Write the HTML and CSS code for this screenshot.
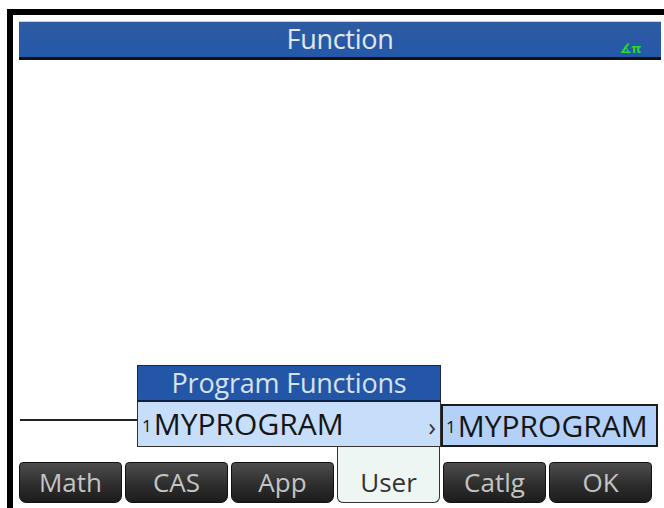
FILE: index.html
```html
<!DOCTYPE html>
<html lang="en">
<head>
  <meta charset="UTF-8">
  <title>Function</title>
  <link rel="stylesheet" href="styles.css">
</head>
<body>
  <div class="screen">
    <div class="title-bar">
      <span class="title">Function</span>
      <span class="mode">&#8737;&#960;</span>
    </div>
    <div class="canvas"></div>
    <div class="menu-area">
      <div class="menu-head">Program Functions</div>
      <div class="menu-line">
        <div class="entry-line"></div>
        <div class="menu-row">
          <span class="idx">1</span><span class="name">MYPROGRAM</span>
          <span class="chev">&#8250;</span>
        </div>
        <div class="sub-row">
          <span class="idx">1</span><span class="name">MYPROGRAM</span>
        </div>
      </div>
    </div>
    <div class="softkeys">
      <div class="key">Math</div>
      <div class="key">CAS</div>
      <div class="key">App</div>
      <div class="key active">User</div>
      <div class="key">Catlg</div>
      <div class="key">OK</div>
    </div>
  </div>
</body>
</html>
```

FILE: styles.css
```css
body { margin: 0; background: #fff; font-family: "Open Sans", "DejaVu Sans", sans-serif; }
.screen { margin: 9px 0 0 7px; height: 499px; box-sizing: border-box; border-top: 6px solid #000; border-left: 6px solid #000; display: flex; flex-direction: column; }

.title-bar { position: relative; margin: 7px 3px 0 6px; height: 35px; background: linear-gradient(#2f5aa2, #2459aa); border-bottom: 3px solid #111; box-shadow: 0 -1px 0 #c8d0dc; display: flex; align-items: center; justify-content: center; }
.title { color: #e0e8f0; font-size: 27px; line-height: 1; letter-spacing: -0.3px; margin-top: -2px; }
.mode { position: absolute; right: 20px; bottom: 2px; color: #22e022; font-size: 13px; font-weight: bold; line-height: 1; }

.canvas { flex: 1; }

.menu-area { display: flex; flex-direction: column; }
.menu-head { margin-left: 124px; width: 304px; height: 37px; box-sizing: border-box; background: #2356a6; border: 1px solid #1a2a44; border-bottom: 2px solid #102040; color: #d6e2f2; font-size: 27px; line-height: 33px; text-align: center; letter-spacing: -0.2px; }
.menu-line { display: flex; align-items: flex-end; height: 45px; }
.entry-line { width: 117px; height: 2px; background: #222; margin: 0 0 26px 7px; }
.menu-row { width: 304px; height: 45px; box-sizing: border-box; background: #c6defa; border: 1px solid #333; border-top: 0; display: flex; align-items: center; padding-left: 4px; }
.sub-row { width: 217px; height: 43px; box-sizing: border-box; background: #b2d0f8; border: 2px solid #1c1c1c; display: flex; align-items: center; padding-left: 3px; }
.idx { font-size: 17px; color: #111; margin-right: 2px; margin-top: 2px; }
.name { font-size: 30px; color: #151515; letter-spacing: 0; line-height: 1; }
.chev { margin-left: auto; margin-right: 4px; font-size: 26px; color: #333; line-height: 1; margin-top: 4px; }

.softkeys { display: grid; grid-template-columns: repeat(6, 103px); column-gap: 3px; margin-left: 6px; height: 56px; align-items: end; margin-bottom: 5px; }
.key { height: 41px; box-sizing: border-box; background: linear-gradient(#4c4c4c, #2c2c2c 60%, #1c1c1c); border: 1px solid #111; border-radius: 4px 4px 7px 7px; color: #c4c4c4; font-size: 26px; line-height: 38px; text-align: center; }
.key.active { height: 56px; background: #eef6f4; border: 1px solid #333; border-top: 0; border-radius: 0 0 6px 6px; color: #333; line-height: 70px; }
```
